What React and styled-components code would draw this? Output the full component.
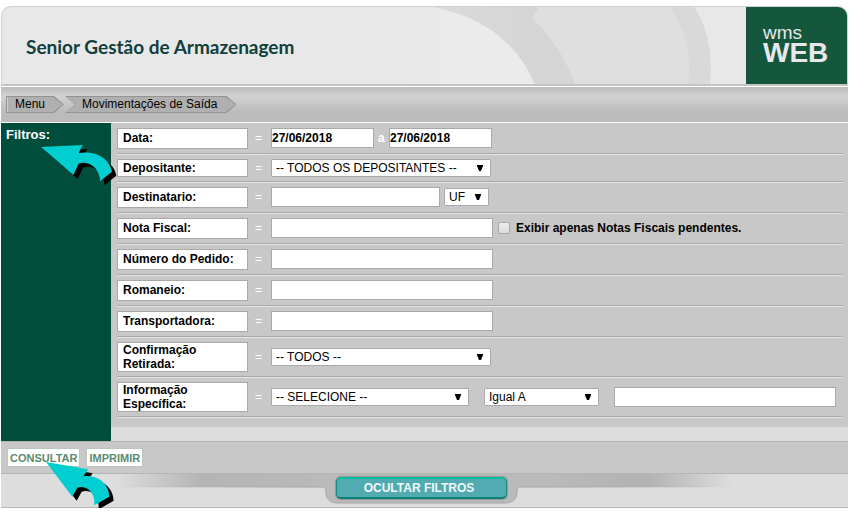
import React, { useState } from "react";
import styled, { createGlobalStyle } from "styled-components";

const GlobalStyle = createGlobalStyle`
  * {
    box-sizing: border-box;
  }
  body {
    margin: 0;
    background: #fff;
    color: #000;
    font-family: "Liberation Sans", Arial, sans-serif;
    font-size: 12px;
  }
  button, input, select {
    font-family: inherit;
    font-size: 12px;
  }
`;

const Page = styled.div`
  padding: 6px 17px 0 1px;
`;

const Header = styled.header`
  position: relative;
  display: flex;
  justify-content: space-between;
  height: 80px;
  overflow: hidden;
  background: #e8e8e8;
  border: 1px solid #d0d0d0;
  border-bottom: 2px solid #c4c4c4;
  border-radius: 10px 10px 0 0;
`;

const HeaderArt = styled.svg`
  position: absolute;
  top: 0;
  right: 100px;
  width: 340px;
  height: 78px;
`;

const Title = styled.h1`
  margin: 0;
  padding: 2px 24px 0;
  align-self: center;
  color: #0f403d;
  font-family: Lato, "Open Sans", sans-serif;
  font-size: 19px;
  line-height: 24px;
  font-weight: 700;
`;

const Brand = styled.div`
  position: relative;
  width: 101px;
  padding: 18px 17px;
  background: #15573c;
  color: #e8e8ec;
  font-size: 19px;
  line-height: 16px;

  strong {
    display: block;
    font-size: 28px;
    line-height: 24px;
  }
`;

const Crumbs = styled.nav`
  display: flex;
  align-items: center;
  gap: 1px;
  height: 36px;
  padding: 0 5px;
  margin-top: 1px;
  background: linear-gradient(#bcbcbc, #d2d2d2 25%, #bababa 75%, #bcbcbc);
  border-bottom: 1px solid #fff;
`;

const crumbShape = ({ $first }) =>
  `polygon(0 0, calc(100% - 10px) 0, 100% 50%, calc(100% - 10px) 100%, 0 100%, ${$first ? "0" : "10px"} 50%)`;

const Crumb = styled.a`
  position: relative;
  padding: ${({ $first }) => ($first ? "0 19px 0 9px" : "0 19px 0 17px")};
  background: #939393;
  clip-path: ${crumbShape};
  color: #000;
  line-height: 17px;
  text-decoration: none;

  &::before {
    content: "";
    position: absolute;
    inset: 1px;
    background: #b0b0b0;
    border-left: ${({ $first }) => ($first ? "1px solid #d0d0d0" : "0")};
    clip-path: ${crumbShape};
  }
  span {
    position: relative;
  }
`;

const Content = styled.main`
  display: flex;
  background: #ddd;
`;

const Side = styled.aside`
  flex: 0 0 110px;
  padding: 4px 5px;
  background: #004d3b;

  h2 {
    margin: 0;
    color: #fff;
    font-size: 13px;
    line-height: 16px;
  }
`;

const Filters = styled.form`
  flex: 1;
  margin-bottom: 14px;
  padding: 1px 5px 9px 6px;
  background: #c8c8c8;
`;

const Row = styled.div`
  display: grid;
  grid-template-columns: 131px 23px 1fr;
  align-items: ${({ $tall }) => ($tall ? "center" : "start")};
  padding: 4px 0;
  border-bottom: 1px solid #a9a9a9;
  box-shadow: 0 1px 0 #e4e4e4;
  margin-bottom: 1px;
`;

const Label = styled.label`
  padding: ${({ $slim }) => ($slim ? "1px 5px" : "2px 5px 3px")};
  ${({ $tall }) => $tall && "padding: 0 60px 0 5px;"}
  background: #fff;
  border: 1px solid #a9a9a9;
  font-weight: 700;
  line-height: 14px;
`;

const Equals = styled.span`
  padding-left: 7px;
  color: #fff;
  line-height: ${({ $slim }) => ($slim ? 18 : 20)}px;
`;

const Fields = styled.div`
  display: flex;
  align-items: center;
  gap: ${({ $gap }) => $gap || 4}px;
`;

const Input = styled.input`
  width: ${({ $w }) => $w}px;
  height: 20px;
  padding: 0;
  background: #fff;
  border: 1px solid #a9a9a9;
  font-weight: 700;
`;

const SelectBox = styled.div`
  position: relative;
  width: ${({ $w }) => $w}px;

  select {
    display: block;
    width: 100%;
    height: 18px;
    padding: 0 4px;
    appearance: none;
    background: #fff;
    border: 1px solid #a9a9a9;
    border-radius: 1px;
    color: #000;
  }
  svg {
    position: absolute;
    top: 6px;
    right: 8px;
    pointer-events: none;
  }
`;

const Until = styled.span`
  width: 7px;
  color: #fff;
  font-weight: 700;
`;

const Pending = styled.label`
  display: flex;
  align-items: center;
  gap: 6px;
  font-weight: 700;

  input {
    width: 12px;
    height: 12px;
    margin: 0 0 0 1px;
    appearance: none;
    background: linear-gradient(#eee, #dcdcdc);
    border: 1px solid #aaa;
    border-radius: 2px;
  }
  input:checked {
    background: #004d3b;
  }
`;

const Actions = styled.div`
  display: flex;
  gap: 6px;
  padding: 6px;
  background: #c8c8c8;
  border-top: 1px solid #b5b5b5;
`;

const ActionButton = styled.button`
  height: 19px;
  padding: 0 2px;
  background: #fff;
  border: 1px solid #b9c7be;
  border-radius: 1px;
  color: #5c8a70;
  font-size: 11px;
  font-weight: 700;
`;

const Footer = styled.footer`
  position: relative;
  display: flex;
  justify-content: center;
  height: 35px;
  padding: 3px 7px 0 0;
  background: #ddd;
  border-top: 1px solid #b5b5b5;
  border-bottom: 1px solid #b5b5b5;
`;

const TabArt = styled.svg`
  position: absolute;
  top: 0;
  left: 50%;
  width: 616px;
  height: 32px;
  margin-left: -308px;
`;

const ToggleButton = styled.button`
  position: relative;
  width: 171px;
  height: 22px;
  padding: 0 4px 0 0;
  background: #52abb0;
  border: 1px solid #168a80;
  border-top: 2px solid #05bd9f;
  border-bottom: 2px solid #078275;
  border-radius: 5px;
  box-shadow: 0 0 1px 1px #969696;
  color: #f0f8f8;
  font-weight: 700;
  line-height: 16px;
`;

const PointerArt = styled.svg`
  position: absolute;
  top: ${({ $top }) => $top}px;
  left: ${({ $left }) => $left}px;
  z-index: 1;
  width: 78px;
  height: 52px;
  pointer-events: none;
`;

const Anchor = styled.div`
  position: relative;
`;

const LOWER = "M0 0 L127 22 L112 43 C150 38 188 60 190 104 L145 130 C148 96 126 68 94 77 L79 104 Z";
const UPPER = "M0 6 L125 0 L113 24 C162 16 206 40 213 80 L177 109 C178 74 146 44 113 56 L97 90 Z";

const Pointer = ({ d, top, left }) => (
  <PointerArt viewBox="0 0 234 156" $top={top} $left={left} aria-hidden="true">
    <path d={d} transform="translate(13 12)" fill="#000" />
    <path d={d} fill="#00ced1" />
  </PointerArt>
);

const Select = ({ id, label, width, options }) => (
  <SelectBox $w={width}>
    <select id={id} aria-label={label}>
      {options.map((o) => <option key={o}>{o}</option>)}
    </select>
    <svg width="6" height="6" viewBox="0 0 6 6" aria-hidden="true">
      <path d="M0 0H6V1L4 6H2L0 1Z" />
    </svg>
  </SelectBox>
);

const Field = ({ id, label, slim, tall, gap, children }) => (
  <Row $tall={tall}>
    <Label htmlFor={id} $slim={slim} $tall={tall}>{label}</Label>
    <Equals $slim={slim}>=</Equals>
    <Fields $gap={gap}>{children}</Fields>
  </Row>
);

const App = () => {
  const [showFilters, setShowFilters] = useState(true);

  return (
    <>
      <GlobalStyle />
      <Page>
        <Header>
          <HeaderArt viewBox="0 0 340 78" aria-hidden="true">
            <defs>
              <linearGradient id="ring">
                <stop offset="0" stopColor="#dadada" />
                <stop offset="0.4" stopColor="#d5d5d5" />
                <stop offset="1" stopColor="#d9d9d9" />
              </linearGradient>
              <linearGradient id="glow">
                <stop offset="0" stopColor="#e8e8e8" />
                <stop offset="0.4" stopColor="#ebebeb" />
              </linearGradient>
            </defs>
            <path d="M0 0H29C78 10 115 40 128 78H0Z" fill="url(#glow)" />
            <path d="M25 0H287C301 19 306 50 303 78H128C110 35 75 9 25 0Z" fill="url(#ring)" />
            <path d="M132 0H262C278 18 284 45 282 78H168C160 52 142 27 125 11Z" fill="#dfdfdf" />
          </HeaderArt>
          <Title>Senior Gestão de Armazenagem</Title>
          <Brand>wms<strong>WEB</strong></Brand>
        </Header>

        <Crumbs aria-label="Navegação">
          <Crumb href="#menu" $first><span>Menu</span></Crumb>
          <Crumb href="#saida"><span>Movimentações de Saída</span></Crumb>
        </Crumbs>

        {showFilters && (
          <Content>
            <Side>
              <Anchor>
                <h2>Filtros:</h2>
                <Pointer d={UPPER} top={18} left={35} />
              </Anchor>
            </Side>
            <Filters id="filtros" onSubmit={(e) => e.preventDefault()}>
              <Field id="data" label="Data:">
                <Input id="data" $w={103} defaultValue="27/06/2018" />
                <Until>a</Until>
                <Input aria-label="Data final" $w={103} defaultValue="27/06/2018" />
              </Field>
              <Field id="depositante" label="Depositante:" slim>
                <Select id="depositante" width={220} options={["-- TODOS OS DEPOSITANTES --"]} />
              </Field>
              <Field id="destinatario" label="Destinatario:">
                <Input id="destinatario" $w={169} />
                <Select label="UF" width={45} options={["UF"]} />
              </Field>
              <Field id="nota" label="Nota Fiscal:">
                <Input id="nota" $w={222} />
                <Pending>
                  <input type="checkbox" />
                  Exibir apenas Notas Fiscais pendentes.
                </Pending>
              </Field>
              <Field id="pedido" label="Número do Pedido:">
                <Input id="pedido" $w={222} />
              </Field>
              <Field id="romaneio" label="Romaneio:">
                <Input id="romaneio" $w={222} />
              </Field>
              <Field id="transportadora" label="Transportadora:">
                <Input id="transportadora" $w={222} />
              </Field>
              <Field id="retirada" label="Confirmação Retirada:" tall>
                <Select id="retirada" width={220} options={["-- TODOS --"]} />
              </Field>
              <Field id="info" label="Informação Específica:" tall gap={15}>
                <Select id="info" width={198} options={["-- SELECIONE --"]} />
                <Select label="Operador" width={115} options={["Igual A"]} />
                <Input aria-label="Valor" $w={222} />
              </Field>
            </Filters>
          </Content>
        )}

        <Anchor>
          <Actions>
            <ActionButton type="submit" form="filtros">CONSULTAR</ActionButton>
            <ActionButton type="button">IMPRIMIR</ActionButton>
          </Actions>
          <Pointer d={LOWER} top={21} left={45} />
        </Anchor>

        <Footer>
          <TabArt viewBox="0 0 616 32" aria-hidden="true">
            <defs>
              <linearGradient id="band">
                <stop offset="0" stopColor="#b4b4b4" stopOpacity="0" />
                <stop offset="0.14" stopColor="#b4b4b4" />
                <stop offset="0.35" stopColor="#bababa" />
                <stop offset="0.7" stopColor="#bababa" />
                <stop offset="0.86" stopColor="#b2b2b2" />
                <stop offset="1" stopColor="#b2b2b2" stopOpacity="0" />
              </linearGradient>
              <linearGradient id="edge">
                <stop offset="0" stopColor="#a5a5a5" stopOpacity="0" />
                <stop offset="0.3" stopColor="#a5a5a5" />
                <stop offset="0.7" stopColor="#a5a5a5" />
                <stop offset="1" stopColor="#a5a5a5" stopOpacity="0" />
              </linearGradient>
            </defs>
            <path
              d="M0 0H616V13H404C400 13 400 16 400 20C399 25 396 29 388 29H221C214 29 210 26 209 20C209 16 209 13 205 13H0Z"
              fill="url(#band)"
            />
            <path
              d="M0 13H205C209 13 209 16 209 20C210 26 214 29 221 29H388C396 29 399 25 400 20C400 16 400 13 404 13H616"
              fill="none"
              stroke="url(#edge)"
            />
          </TabArt>
          <ToggleButton type="button" onClick={() => setShowFilters((s) => !s)}>
            {showFilters ? "OCULTAR FILTROS" : "EXIBIR FILTROS"}
          </ToggleButton>
        </Footer>
      </Page>
    </>
  );
};

export default App;
